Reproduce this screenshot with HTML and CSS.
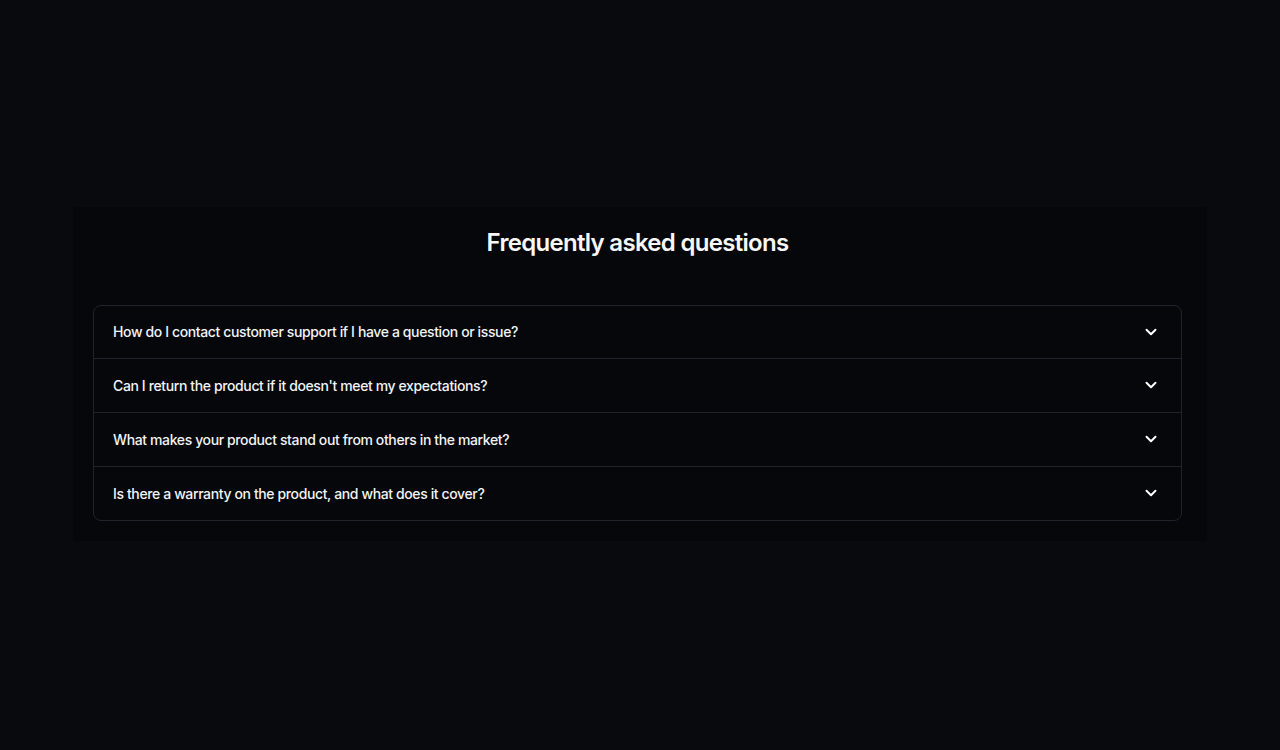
FILE: index.html
```html
<!DOCTYPE html>
<html lang="en">
<head>
<meta charset="utf-8">
<title>FAQ</title>
<link rel="stylesheet" href="styles.css">
</head>
<body>
<main class="page">
  <section class="faq">
    <h2 class="faq-title">Frequently asked questions</h2>
    <div class="faq-list">
      <button class="faq-item"><span>How do I contact customer support if I have a question or issue?</span><svg class="chev" viewBox="0 0 24 24" width="18" height="18"><path d="M6 9l6 6 6-6"/></svg></button>
      <button class="faq-item"><span>Can I return the product if it doesn't meet my expectations?</span><svg class="chev" viewBox="0 0 24 24" width="18" height="18"><path d="M6 9l6 6 6-6"/></svg></button>
      <button class="faq-item"><span>What makes your product stand out from others in the market?</span><svg class="chev" viewBox="0 0 24 24" width="18" height="18"><path d="M6 9l6 6 6-6"/></svg></button>
      <button class="faq-item"><span>Is there a warranty on the product, and what does it cover?</span><svg class="chev" viewBox="0 0 24 24" width="18" height="18"><path d="M6 9l6 6 6-6"/></svg></button>
    </div>
  </section>
</main>
</body>
</html>
```
FILE: styles.css
```css
* { box-sizing: border-box; }
html, body { margin: 0; padding: 0; }
body {
  background: #090a0d;
  font-family: Inter, "Noto Sans", sans-serif;
  color: #f4f5f7;
  height: 750px;
}
.page {
  padding-top: 207px;
  display: flex;
  justify-content: center;
}
.faq {
  width: 1134px;
  background: #05070a;
  padding: 20px 25px 20px 20px;
}
.faq-title {
  margin: 0 0 48px;
  padding-top: 1px;
  height: 30px;
  text-align: center;
  font-size: 24px;
  line-height: 30px;
  font-weight: 600;
  letter-spacing: -0.029em;
  color: #f7f7f8;
}
.faq-list {
  border: 1px solid #1f232b;
  border-radius: 8px;
  overflow: hidden;
}
.faq-item {
  display: flex;
  align-items: center;
  justify-content: space-between;
  width: 100%;
  height: 54px;
  padding: 0 21px 1px 19px;
  background: transparent;
  border: 0;
  border-top: 1px solid #1f232b;
  color: #f2f3f5;
  font-family: inherit;
  font-size: 14px;
  font-weight: 500;
  letter-spacing: -0.027em;
  text-align: left;
}
.faq-item:first-child { border-top: 0; height: 52px; padding-bottom: 1px; }
.chev {
  fill: none;
  stroke: #ffffff;
  stroke-width: 2.6;
  stroke-linecap: round;
  stroke-linejoin: round;
}
```
